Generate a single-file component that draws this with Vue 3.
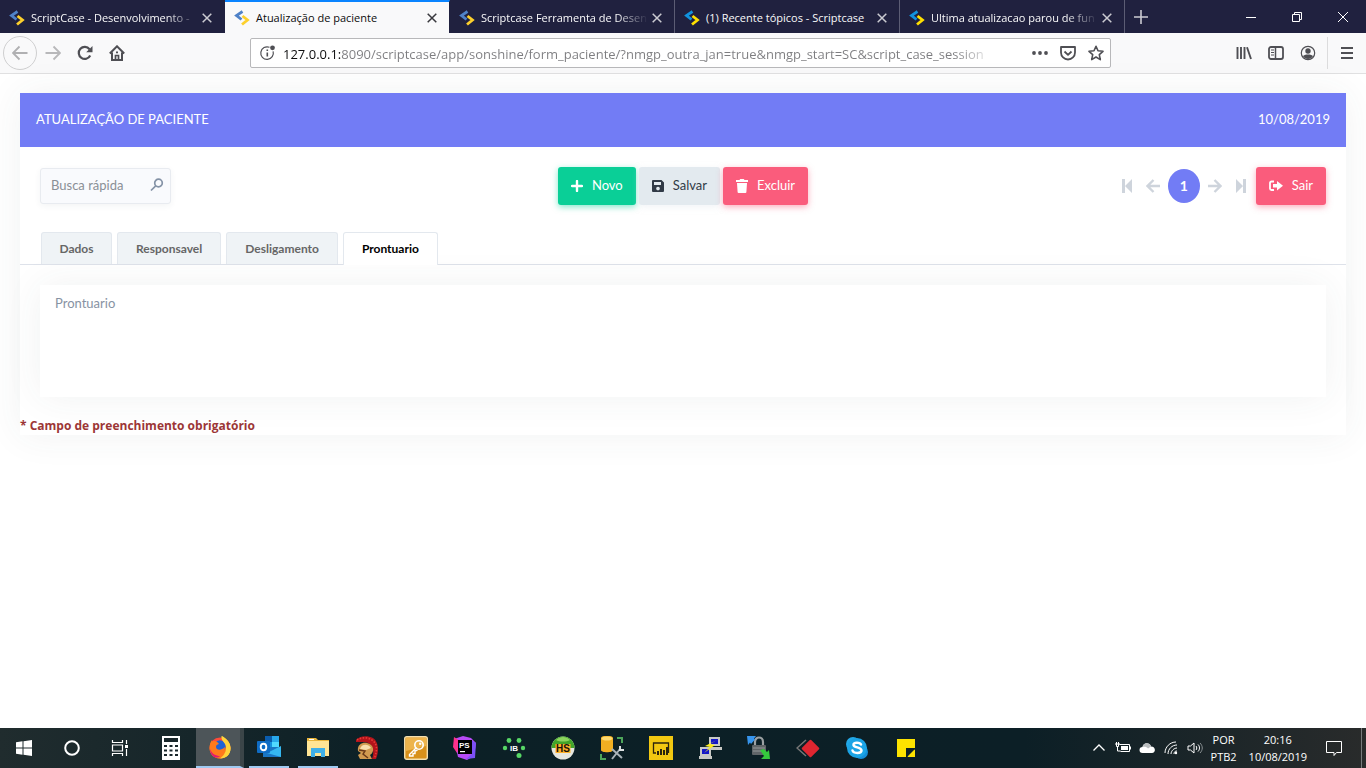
<template>
  <div class="desktop">
    <!-- browser tabs -->
    <header class="tabstrip">
      <div v-for="tab in browserTabs" :key="tab.title" class="btab" :class="{ current: tab.current, faded: tab.faded }">
        <svg class="favicon" viewBox="0 0 16 16" fill="none" stroke-width="2.8">
          <path d="M8.500 1.500 2.500 5.500 7.500 9.500" :stroke="tab.blue" />
          <path d="M8.500 6 13.500 10 8 14.500" :stroke="tab.yellow" />
        </svg>
        <span class="btab-title">{{ tab.title }}</span>
        <button class="btab-close" aria-label="Fechar aba">
          <svg viewBox="0 0 10 10"><path d="M.7.7 9.3 9.3M9.3.7.7 9.3" stroke="currentColor" stroke-width="1.5" /></svg>
        </button>
      </div>
      <button class="new-tab" aria-label="Nova aba">
        <svg viewBox="0 0 14 14"><path d="M7 0v14M0 7h14" stroke="currentColor" stroke-width="1.6" /></svg>
      </button>
      <div class="window-buttons">
        <button aria-label="Minimizar"><svg viewBox="0 0 10 10"><path d="M0 5.5h10" /></svg></button>
        <button aria-label="Restaurar"><svg viewBox="0 0 10 10"><path d="M.5 2.500h7v7h-7zM2.500 2.500v-2h7v7h-2" /></svg></button>
        <button aria-label="Fechar"><svg viewBox="0 0 10 10"><path d="M0 0 10 10M10 0 0 10" /></svg></button>
      </div>
    </header>

    <!-- navigation bar -->
    <nav class="navbar">
      <div class="nav-left">
        <button class="back" aria-label="Voltar">
          <svg viewBox="0 0 16 16"><path d="M15.500 8H1.500M7.500 1.500 1 8l6.500 6.500" stroke-width="1.8" /></svg>
        </button>
        <button class="dim" aria-label="Avançar">
          <svg viewBox="0 0 16 16"><path d="M.5 8h14M8.500 1.500 15 8l-6.500 6.500" stroke-width="1.8" /></svg>
        </button>
        <button aria-label="Recarregar">
          <svg viewBox="0 0 16 16">
            <path d="M13.200 10.500a6 6 0 1 1-.7-6.300" stroke-width="2.200" />
            <path d="M15.500 1v6.300H9.200z" fill="currentColor" stroke="none" />
          </svg>
        </button>
        <button aria-label="Início">
          <svg viewBox="0 0 16 16">
            <path d="M.8 8.500 8 1.300l7.200 7.200M3 7.500V15h10V7.500" stroke-width="2" />
            <path d="M6.500 15v-4.500h3V15M7 7.300h2" stroke-width="1.700" />
          </svg>
        </button>
      </div>
      <div class="urlbox">
        <svg class="info" viewBox="0 0 18 18">
          <path d="M10.500 3.300a6.300 6.300 0 1 0 3.600 4" stroke-width="1.200" />
          <path d="M8.300 8.500v4M8.300 5.500V7" stroke-width="1.600" />
          <circle cx="13.500" cy="3.800" r="2.400" fill="currentColor" stroke="none" />
        </svg>
        <input class="url" type="text" aria-label="Endereço" :value="url" />
        <button aria-label="Ações da página">
          <svg viewBox="0 0 16 16" class="solid"><circle cx="2" cy="8" r="1.900" /><circle cx="8" cy="8" r="1.900" /><circle cx="14" cy="8" r="1.900" /></svg>
        </button>
        <button aria-label="Salvar no Pocket">
          <svg viewBox="0 0 16 16"><path d="M1 2h14v5.500a7 7 0 0 1-14 0zM4.500 6.500 8 9.800l3.500-3.300" stroke-width="1.800" stroke-linejoin="round" /></svg>
        </button>
        <button aria-label="Favoritar">
          <svg viewBox="0 0 16 16"><path d="m8 1.300 2 4.500 5 .5-3.700 3.300 1 5L8 12l-4.300 2.600 1-5L1 6.300l5-.5z" stroke-width="1.600" stroke-linejoin="round" /></svg>
        </button>
      </div>
      <div class="nav-right">
        <button aria-label="Biblioteca">
          <svg viewBox="0 0 16 16"><path d="M1.500 2v12M5 2v12M8.500 2v12M11 2.200l4 11.800" stroke-width="1.900" /></svg>
        </button>
        <button aria-label="Barra lateral">
          <svg viewBox="0 0 16 16"><rect x="1" y="2" width="14" height="12" rx="2" stroke-width="1.800" /><path d="M7.500 2v12" stroke-width="1.500" /><path d="M3 5h3M3 7.500h3M3 10h3" stroke-width="1" /></svg>
        </button>
        <button aria-label="Conta">
          <svg viewBox="0 0 16 16"><circle cx="8" cy="8" r="6.700" stroke-width="1.200" /><circle cx="8" cy="6" r="2.700" fill="currentColor" stroke="none" /><path d="M3 11.300C4 9 12 9 13 11.300a6 6 0 0 1-10 0z" fill="currentColor" stroke="none" /></svg>
        </button>
        <button class="menu" aria-label="Menu">
          <svg viewBox="0 0 16 16"><path d="M2 3h12M2 8h12M2 13h12" stroke-width="2" /></svg>
        </button>
      </div>
    </nav>

    <!-- page -->
    <main class="page">
      <form class="card" @submit.prevent>
        <div class="card-header">
          <span>ATUALIZAÇÃO DE PACIENTE</span>
          <span>10/08/2019</span>
        </div>
        <div class="actions">
          <div class="search">
            <input v-model="search" type="text" placeholder="Busca rápida" aria-label="Busca rápida" />
            <button type="button" aria-label="Buscar">
              <svg viewBox="0 0 14 14"><circle cx="8.500" cy="5" r="3.800" /><path d="M5.700 7.800 1 12.500" /></svg>
            </button>
          </div>
          <div class="main-buttons">
            <button type="button" class="btn green">
              <svg viewBox="0 0 12 12"><path d="M6 1v10M1 6h10" stroke="currentColor" stroke-width="2.400" stroke-linecap="round" /></svg>
              <span>Novo</span>
            </button>
            <button type="button" class="btn grey">
              <svg viewBox="0 0 12 12"><path fill="currentColor" fill-rule="evenodd" d="M1 0h8.500L12 2.500V11a1 1 0 0 1-1 1H1a1 1 0 0 1-1-1V1a1 1 0 0 1 1-1zM2 2v3h7V2zM6 6.700a1.800 1.800 0 1 0 .01 0z" /></svg>
              <span>Salvar</span>
            </button>
            <button type="button" class="btn red">
              <svg class="trash" viewBox="0 0 12 14"><path fill="currentColor" d="M0 1h3.500l.7-1h3.600l.7 1H12v2H0zM1 4h10l-.6 9a1 1 0 0 1-1 1H2.600a1 1 0 0 1-1-1z" /></svg>
              <span>Excluir</span>
            </button>
          </div>
          <div class="paging">
            <button type="button" class="pg" aria-label="Primeiro"><svg viewBox="0 0 14 14"><path d="M2 0h3v14H2zM12 0v14L5 7z" /></svg></button>
            <button type="button" class="pg" aria-label="Anterior"><svg viewBox="0 0 14 14" class="line"><path d="M14 7H1.500M7.500 1 1.500 7l6 6" /></svg></button>
            <span class="pg-current">1</span>
            <button type="button" class="pg" aria-label="Próximo"><svg viewBox="0 0 14 14" class="line"><path d="M0 7h12.500M6.500 1l6 6-6 6" /></svg></button>
            <button type="button" class="pg" aria-label="Último"><svg viewBox="0 0 14 14"><path d="M2 0v14l7-7zM9 0h3v14H9z" /></svg></button>
            <button type="button" class="btn red">
              <svg class="exit" viewBox="0 0 14 12"><path d="M5 1.500H2.500A1.500 1.500 0 0 0 1 3v5.500A1.500 1.500 0 0 0 2.500 10H5" fill="none" stroke="currentColor" stroke-width="1.800" /><path fill="currentColor" d="M4 4h4V1l6 4.800-6 4.700v-3H4z" /></svg>
              <span>Sair</span>
            </button>
          </div>
        </div>
        <div class="tabs" role="tablist">
          <button
            v-for="name in formTabs"
            :key="name"
            type="button"
            role="tab"
            :aria-selected="name === activeTab"
            :class="{ active: name === activeTab }"
            @click="activeTab = name"
          >{{ name }}</button>
        </div>
        <div class="panel">
          <div class="field">
            <label for="prontuario">{{ activeTab }}</label>
            <textarea id="prontuario" v-model="notes"></textarea>
          </div>
        </div>
        <p class="required">* Campo de preenchimento obrigatório</p>
      </form>
    </main>

    <!-- taskbar -->
    <footer class="taskbar">
      <button class="sys" aria-label="Iniciar">
        <svg viewBox="0 0 24 24" fill="#fff"><path d="M4 6.200 10.500 5.300v6.200H4zM11.500 5.200 20 4v7.500h-8.500zM4 12.500h6.500v6.200L4 17.800zM11.500 12.500H20V20l-8.500-1.200z" /></svg>
      </button>
      <button class="sys" aria-label="Cortana">
        <svg viewBox="0 0 24 24" fill="none"><circle cx="12" cy="12" r="6.800" stroke="#fff" stroke-width="2" /></svg>
      </button>
      <button class="sys" aria-label="Visão de tarefas">
        <svg viewBox="0 0 24 24" fill="none" stroke="#fff" stroke-width="1.200"><path d="M4.500 4v2.500h10V4M4.500 20v-2.500h10V20M4.500 9h10v6h-10zM18.500 4v4M18.500 13v7" /><path d="M17 9h3v3h-3z" fill="#fff" stroke="none" /></svg>
      </button>
      <div class="apps">
        <button aria-label="Calculadora">
          <svg viewBox="0 0 24 24"><path fill="#fff" d="M3 0h18v24H3z" /><path fill="#18262a" d="M5 2h14v4H5zM5 9h3v2H5zM10.500 9h3v2h-3zM16 9h3v2h-3zM5 13.500h3v2H5zM10.500 13.500h3v2h-3zM16 13.500h3v2h-3zM5 18h3v2H5zM10.500 18h3v2h-3zM16 18h3v2h-3z" /></svg>
        </button>
        <button class="focused" aria-label="Firefox">
          <svg viewBox="0 0 24 24">
            <circle cx="12" cy="13" r="10.500" fill="#ff4b3a" />
            <path d="M14 1c3 2 8 5 8.500 12S17 23.500 12 23.500c5-1 8-4 7.500-9S15 6 14 1z" fill="#ffd43a" />
            <path d="M12 23.500C5 23.500 1.500 18 1.500 13c0-3 1-6 2.500-8v3c3-3 7-1 9 0 5 2 7 8 4 11-2 3-4 4-5 4.500z" fill="#ff7a1c" />
            <circle cx="12" cy="11" r="5.800" fill="#1d62d6" />
            <path d="M3 7c3-2 6-1 8 2-2 .5-3 1-3 3 0 3 5 4 9 0 0 7-9 9-13 4-2-3-2-6-1-9z" fill="#ff7a1c" />
            <path d="M13.500 1c-1 5 4.500 6 4.500 12 0 5-3 8-6 10.500 6 0 10.500-4 10.500-10.500S17 3 13.500 1z" fill="#ffd43a" />
            <path d="M2 14c2 5 6 7 10 7-2 2-5 2-7 0s-3-4-3-7z" fill="#e31b6d" />
          </svg>
        </button>
        <button class="running" aria-label="Outlook">
          <svg viewBox="0 0 24 24"><path fill="#1490df" d="M8 1h14v12H8z" /><path fill="#0a5cad" d="M8 1h7v6H8z" /><path fill="#50d9ff" d="M15 7h7v5h-7z" /><path fill="#28a8ea" d="M15 1h7v6h-7z" /><path fill="#1976c5" d="M6 12h18v10H6z" /><path fill="#35b8f1" d="M24 11v11L10 18z" /><rect y="6" width="13" height="12" rx="1" fill="#0f6cc4" /><ellipse cx="6.500" cy="12" rx="2.800" ry="3.300" fill="none" stroke="#fff" stroke-width="1.900" /></svg>
        </button>
        <button class="running" aria-label="Explorador de arquivos">
          <svg viewBox="0 0 24 24"><path fill="#e9b63c" d="M1 3h9l2 2h11v16H1z" /><path fill="#ffe595" d="M1 6h22v15H1z" /><path fill="#3fb0e8" d="M5 13h14v9h-4v-4H9v4H5z" /><path fill="#fff" d="M3 4h5v1H3z" /></svg>
        </button>
        <button aria-label="Capacete">
          <svg viewBox="0 0 24 24">
            <path d="M1 4C4 0 12-1 18 2c6 4 6 14 3 21h-4c3-8 1-17-9-17C5 6 3 6 1 6z" fill="#b3141b" />
            <path d="M2 4C10-1 21 3 21.500 12c0 4-1 7-2 10" fill="none" stroke="#e83b36" stroke-width="1.600" stroke-dasharray="1.500 1.500" />
            <path d="M3 15C2 8 8 6 12 7c7 1 8 9 3 12l2 4H5l-2-4 3-2z" fill="#d29b50" />
            <path d="M5 13c1-5 8-6 11-1l-5 2z" fill="#f8dfae" />
            <path d="m4 14 6 1-2 3 5 4" fill="none" stroke="#6a3918" stroke-width="1.400" />
          </svg>
        </button>
        <button aria-label="Chave">
          <svg viewBox="0 0 24 24"><rect x=".7" y=".7" width="22.600" height="22.600" rx="2" fill="#d8911b" stroke="#f3dfae" stroke-width="1.400" /><path fill="#edb44c" d="M2 2h20v8L2 15z" /><path d="m12.500 11.500-7 7V20H9v-2.500h2V15l2.500-1" fill="none" stroke="#fff" stroke-width="1.400" /><circle cx="15" cy="9" r="4.200" fill="none" stroke="#fff" stroke-width="1.600" /><circle cx="16.200" cy="7.800" r="1.200" fill="#fff" /></svg>
        </button>
        <button aria-label="PhpStorm">
          <svg viewBox="0 0 24 24"><path fill="#b74af7" d="m1 3 9-3 8 2 5 5-2 13-7 4-9-3z" /><path fill="#ff318c" d="m1 1 6 4-3 12-4-6z" /><path fill="#7b50f5" d="m18 4 5 3-1 15-9 1 6-5z" /><path d="M5 4h14v14H5z" /><text x="6" y="12" class="app-text" fill="#fff">PS</text><path fill="#fff" d="M7 15h5v1.200H7z" /></svg>
        </button>
        <button aria-label="IB">
          <svg viewBox="0 0 24 24"><g fill="#57d766"><circle cx="7" cy="4.500" r="2.400" /><circle cx="17" cy="4.500" r="2.400" /><circle cx="3" cy="12" r="2.200" /><circle cx="21" cy="12" r="2.200" /><circle cx="17" cy="19.500" r="2.500" /></g><text x="8" y="15" class="app-text" fill="#fff">IB</text></svg>
        </button>
        <button aria-label="HS">
          <svg viewBox="0 0 24 24"><circle cx="12" cy="12" r="11.500" fill="#e6e6df" /><path fill="#43a529" d="M.5 12a11.500 11.500 0 0 1 23 0z" /><path fill="#8bd45e" d="M5 4c4-4 10-4 14 0-4 2-10 2-14 0z" /><rect x="4.500" y="8" width="15" height="9" fill="#ffb229" /><text x="5" y="16" class="app-text big" fill="#16110a">HS</text></svg>
        </button>
        <button aria-label="Ferramentas de banco">
          <svg viewBox="0 0 24 24"><path fill="#f2af22" d="M1 2c0-3 12-3 12 0v12c0 3-12 3-12 0z" /><ellipse cx="7" cy="2.500" rx="5.500" ry="2" fill="#ffda70" /><path d="M17 2h5v5M1 18v5h5" fill="none" stroke="#4da65a" stroke-width="2" /><path d="m12 13 10 9M20 13l-8 10" stroke="#a9b2b8" stroke-width="2" /><path d="M20 10v4h4" fill="none" stroke="#dde1e2" stroke-width="2" /></svg>
        </button>
        <button aria-label="Power BI">
          <svg viewBox="0 0 24 24"><path fill="#f2c811" d="M0 0h24v24H0z" /><path d="M7 17H4.500V7h15v10" fill="none" stroke="#2b250d" stroke-width="1.300" /><path d="M9 19v-4M12 19v-6M15 19v-5M18 19v-8" stroke="#2b250d" stroke-width="2" /></svg>
        </button>
        <button aria-label="PuTTY">
          <svg viewBox="0 0 24 24"><g fill="#c9c9c5"><path d="M11 1h11v9H11zM2 11h11v9H2zM12 11h12v3H12zM1 20h13v3H1z" /></g><path fill="#1416c8" d="M13 3h7v5h-7zM4 13h7v5H4z" /><path fill="#ffee1c" d="M19 4 7 10l5 1-6 6 11-8-5-1z" /></svg>
        </button>
        <button aria-label="WinSCP">
          <svg viewBox="0 0 24 24"><path d="M8 10V6c0-6 8-6 8 0v4" fill="none" stroke="#9ca1a3" stroke-width="2.200" /><rect x="5" y="9" width="14" height="10" rx="1" fill="#606568" /><path d="M6 12h12M6 15h12" stroke="#949999" /><path fill="#3795ed" d="M0 0h9L7 2.500l1 1L4 8 3 6.500 1 9z" /><path fill="#35ca3d" d="m13 14 4-1 3 3 2-2 1 9h-9l3-3z" /></svg>
        </button>
        <button aria-label="AnyDesk">
          <svg viewBox="0 0 24 24"><path d="m10 4-9 8 9 8" fill="none" stroke="#777" stroke-width="1.500" /><rect x="8" y="6" width="13" height="13" rx="1" fill="#df2630" transform="rotate(45 14.500 12.500)" /></svg>
        </button>
        <button aria-label="Skype">
          <svg viewBox="0 0 24 24"><circle cx="8" cy="8" r="7" fill="#23a9e8" /><circle cx="16" cy="16" r="7" fill="#168fda" /><circle cx="12" cy="12" r="10" fill="#1ba4e6" /><path d="M16 8.500c-1-2.500-8-2.500-7.500.5.4 3 8 1.800 8 5.500 0 3.200-8 3.200-9 0" fill="none" stroke="#fff" stroke-width="2.500" stroke-linecap="round" /></svg>
        </button>
        <button aria-label="Notas">
          <svg viewBox="0 0 24 24"><path fill="#fde300" d="M3 3h18v18H3z" /><path fill="#0c2026" d="M12 12h9v1l-8 8h-1z" /><path fill="#fde300" d="M14 21v-7h7v7z" /><path fill="#0c2026" d="M13 13h8l-8 8z" /></svg>
        </button>
      </div>
      <div class="tray">
        <div class="tray-icons">
          <svg viewBox="0 0 16 16"><path d="m2.500 10.500 5.500-5.500 5.500 5.500" stroke-width="1.300" /></svg>
          <svg viewBox="0 0 16 16"><path d="M4.500 4.500h10v7h-9M15.500 6.500v3M0 4h5M1.500 2v4.500h2V2M2.500 7v4h3" /><path d="M6 6h7v4H6z" fill="#fff" stroke="none" /></svg>
          <svg viewBox="0 0 16 16"><path d="M3.500 13a3 3 0 0 1 0-6C4 2 11 2 12 6.500c5 0 5 6.500 1 6.500z" fill="#fff" stroke="none" /><path d="M3.500 7C4 2 11 2 12 6.500L9 8.500C8 7 6 6.500 3.500 7z" fill="#b9bdbf" stroke="none" /></svg>
          <svg viewBox="0 0 16 16"><path d="M2 13C2 7 7 2 13 2M5 14c0-5 4-9 9-9M8 14c0-3 3-6 6-6M11 14c0-2 1-3 3-3" /><circle cx="13" cy="13" r="1.200" fill="#fff" stroke="none" /></svg>
          <svg viewBox="0 0 16 16"><path d="M1 6v4h2.500L7 13V3L3.500 6zM9 6c1 1 1 3 0 4M11 4.500c2 2 2 5 0 7" /><path d="M13 3c3 3 3 7 0 10" stroke="#8b9294" /></svg>
        </div>
        <div class="tray-text lang"><span>POR</span><span>PTB2</span></div>
        <div class="tray-text clock"><span>20:16</span><span>10/08/2019</span></div>
        <button class="notify" aria-label="Notificações">
          <svg viewBox="0 0 16 16"><path d="M.5 1.500h15v11h-5L8 15.500V12.500H.5z" /></svg>
        </button>
      </div>
    </footer>
  </div>
</template>

<script setup>
import { ref } from 'vue'

const browserTabs = [
  { title: 'ScriptCase - Desenvolvimento -', blue: '#4f82c8', yellow: '#fdd02c', faded: true },
  { title: 'Atualização de paciente', blue: '#4f82c8', yellow: '#fdd02c', current: true },
  { title: 'Scriptcase Ferramenta de Desen', blue: '#4f82c8', yellow: '#fdd02c', faded: true },
  { title: '(1) Recente tópicos - Scriptcase', blue: '#1192dd', yellow: '#ffe000' },
  { title: 'Ultima atualizacao parou de fun', blue: '#1192dd', yellow: '#ffe000', faded: true }
]

const url = '127.0.0.1:8090/scriptcase/app/sonshine/form_paciente/?nmgp_outra_jan=true&nmgp_start=SC&script_case_session'

const formTabs = ['Dados', 'Responsavel', 'Desligamento', 'Prontuario']
const activeTab = ref('Prontuario')
const search = ref('')
const notes = ref('')
</script>

<style>
body {
  margin: 0;
  background: #fff;
}
</style>

<style scoped>
.desktop {
  --ui: "Open Sans", "Noto Sans", sans-serif;
  --app: Lato, "Open Sans", sans-serif;
  display: flex;
  flex-direction: column;
  min-height: 100vh;
  font-family: var(--ui);
}

.desktop * {
  box-sizing: border-box;
}

button {
  display: flex;
  align-items: center;
  justify-content: center;
  margin: 0;
  padding: 0;
  border: 0;
  background: none;
  color: inherit;
  font: inherit;
}

/* browser tabs */
.tabstrip {
  display: flex;
  height: 33px;
  background: #20213f;
  color: #f9f9fa;
}

.btab {
  display: flex;
  align-items: center;
  flex: 0 1 225px;
  min-width: 0;
  padding: 2px 12px 0 9px;
  border-right: 1px solid #5c5d74;
  font-size: 11px;
}

.btab:first-child {
  border-right-color: transparent;
}

.btab.current {
  padding-top: 0;
  border-top: 2px solid #0a84ff;
  border-right-color: #20213f;
  background: #f9f9fa;
  color: #0c0c0d;
}

.favicon {
  flex: none;
  width: 16px;
  height: 16px;
  margin-right: 6px;
}

.btab-title {
  flex: 1;
  white-space: nowrap;
}

.faded .btab-title {
  mask-image: linear-gradient(to left, transparent, #000 32px);
}

.btab-close {
  flex: none;
  margin-left: 4px;
  color: #cbcbd2;
}

.current .btab-close {
  color: #38383d;
}

.btab-close svg {
  width: 10px;
  height: 10px;
}

.new-tab {
  width: 32px;
  color: #cbcbd2;
}

.new-tab svg {
  width: 14px;
  height: 14px;
}

.window-buttons {
  display: flex;
  margin-left: auto;
}

.window-buttons button {
  width: 46px;
}

.window-buttons svg {
  width: 10px;
  height: 10px;
  fill: none;
  stroke: #fff;
}

/* navigation bar */
.navbar {
  display: flex;
  align-items: center;
  height: 41px;
  border-bottom: 1px solid #e0e0e1;
  background: #f9f9fa;
  color: #4f4f54;
}

.navbar button {
  width: 32px;
  height: 32px;
}

.navbar svg {
  width: 16px;
  height: 16px;
  fill: none;
  stroke: currentColor;
}

.navbar svg.solid {
  fill: currentColor;
  stroke: none;
}

.nav-left {
  display: flex;
  align-items: center;
  flex: none;
  width: 250px;
  padding-left: 3px;
}

.navbar .back {
  width: 34px;
  height: 34px;
  border: 1px solid #cfcfd0;
  border-radius: 50%;
  color: #b0b0b2;
}

.navbar .dim {
  color: #b8b8ba;
}

.urlbox {
  display: flex;
  align-items: center;
  flex: 1;
  min-width: 0;
  height: 30px;
  border: 1px solid #b8b8ba;
  border-radius: 2px;
  padding-left: 8px;
  background: #fff;
}

.urlbox button {
  width: 28px;
  height: 28px;
}

.navbar .info {
  flex: none;
  width: 18px;
  height: 18px;
}

.url {
  flex: 1;
  min-width: 0;
  margin: 0 31px 0 6px;
  padding: 2px 0 0;
  border: 0;
  outline: 0;
  color: #7d7d80;
  font: 13px/20px var(--ui);
  background: linear-gradient(to right, #0c0c0d 59px, #7d7d80 59px, #7d7d80 calc(100% - 40px), #fff);
  background-clip: text;
  -webkit-text-fill-color: transparent;
}

.nav-right {
  display: flex;
  flex: none;
  justify-content: flex-end;
  width: 255px;
}

.navbar .menu {
  width: 39px;
  margin-left: 3px;
  border-left: 1px solid #dcdcdd;
}

/* page */
.page {
  flex: 1;
  padding: 19px 20px;
  font-family: var(--app);
  font-size: 13px;
}

.card {
  background: #fff;
  box-shadow: 0 0 36px rgba(60, 70, 70, 0.07);
}

.card-header {
  display: flex;
  align-items: center;
  justify-content: space-between;
  height: 54px;
  padding: 0 16px 2px;
  background: #727cf5;
  color: #fff;
}

.actions {
  display: grid;
  grid-template-columns: 1fr auto 1fr;
  align-items: center;
  padding: 20px 20px 27px;
}

.search {
  display: flex;
  width: 131px;
  height: 36px;
  padding: 0 6px 2px 10px;
  border: 1px solid #e8ebf0;
  border-radius: 3px;
  background: #f9fafd;
  box-shadow: 0 2px 6px rgba(50, 60, 90, 0.06);
}

.search input {
  flex: 1;
  min-width: 0;
  padding: 0;
  border: 0;
  outline: 0;
  background: none;
  font: inherit;
}

.search input::placeholder {
  color: #8a8f96;
}

.search svg {
  width: 14px;
  height: 14px;
  fill: none;
  stroke: #8492a6;
  stroke-width: 1.7;
}

.main-buttons {
  display: flex;
  gap: 3px;
}

.btn {
  gap: 9px;
  height: 38px;
  padding: 0 13px;
  border-radius: 3px;
}

.btn span {
  padding-bottom: 2px;
}

.btn svg {
  width: 12px;
  height: 12px;
}

.btn svg.trash {
  height: 14px;
}

.btn svg.exit {
  width: 14px;
}

.btn.green {
  background: #0acf97;
  color: #fff;
  box-shadow: 0 2px 6px rgba(10, 207, 151, 0.5);
}

.btn.grey {
  background: #e3eaef;
  color: #313a46;
  box-shadow: 0 2px 6px rgba(227, 234, 239, 0.5);
}

.btn.red {
  background: #fa5c7c;
  color: #fff;
  box-shadow: 0 2px 6px rgba(250, 92, 124, 0.5);
}

.paging {
  display: flex;
  align-items: center;
  justify-content: flex-end;
}

.pg {
  width: 26px;
  height: 34px;
}

.pg svg {
  width: 14px;
  height: 14px;
  fill: #ced4dc;
}

.pg svg.line {
  fill: none;
  stroke: #ced4dc;
  stroke-width: 2.4;
}

.pg-current {
  width: 32px;
  height: 34px;
  margin: 0 2px;
  border-radius: 50%;
  background: #727cf5;
  color: #fff;
  font-size: 14px;
  font-weight: 700;
  line-height: 34px;
  text-align: center;
}

.paging .btn {
  margin-left: 2px;
}

.tabs {
  display: flex;
  gap: 5px;
  padding: 0 21px;
  border-bottom: 1px solid #dee2ea;
}

.tabs button {
  height: 32px;
  padding: 0 17px 1px;
  border: 1px solid #e3e8ee;
  border-bottom: 0;
  border-radius: 3px 3px 0 0;
  background: #eff3f6;
  color: #666;
  font-family: Lato, sans-serif;
  font-size: 12px;
  font-weight: 700;
  min-width: 71px;
}

.tabs button + button {
  padding: 0 18px 1px;
}

.tabs .active {
  height: 33px;
  margin-bottom: -1px;
  background: #fff;
  color: #000;
}

.panel {
  padding: 20px;
}

.field {
  display: flex;
  height: 112px;
  padding: 9px 15px;
  background: #fff;
  box-shadow: 0 0 36px rgba(60, 70, 70, 0.07);
  color: #8792a3;
  line-height: 18px;
}

.field textarea {
  flex: 1;
  margin-left: 20px;
  padding: 0;
  border: 0;
  outline: 0;
  resize: none;
  background: none;
  font: inherit;
}

.required {
  margin: 0;
  color: #9c3636;
  font-family: var(--ui);
  font-size: 12px;
  font-weight: 700;
  line-height: 18px;
}

/* taskbar */
.taskbar {
  display: flex;
  height: 40px;
  background: linear-gradient(to right, #202c2e, #0c2026 28%, #0c1f26 75%, #292b2b);
  color: #fff;
}

.sys,
.apps button {
  flex: none;
  width: 48px;
  height: 40px;
}

.sys svg,
.apps svg {
  width: 24px;
  height: 24px;
}

.apps {
  display: flex;
  gap: 1px;
  margin-left: 3px;
}

.apps .focused {
  padding-left: 4px;
  border-right: 4px solid #3b4548;
  border-bottom: 2px solid #9fcaf2;
  background: #4d5559;
}

.apps .running {
  width: 40px;
  margin: 0 4px;
  border-bottom: 2px solid #9fcaf2;
}

.app-text {
  font: 700 8px "Liberation Sans", sans-serif;
}

.app-text.big {
  font-size: 10px;
}

.tray {
  display: flex;
  align-items: center;
  margin-left: auto;
  padding-right: 4px;
}

.tray-icons {
  display: flex;
  gap: 8px;
  margin-right: 8px;
}

.tray svg {
  flex: none;
  width: 16px;
  height: 16px;
  fill: none;
  stroke: #fff;
}

.tray-text {
  display: flex;
  flex-direction: column;
  align-items: center;
  font-size: 11px;
  line-height: 17px;
}

.lang {
  margin-right: 12px;
}

.notify {
  width: 55px;
  height: 40px;
  border-right: 1px solid #777b7c;
}
</style>
